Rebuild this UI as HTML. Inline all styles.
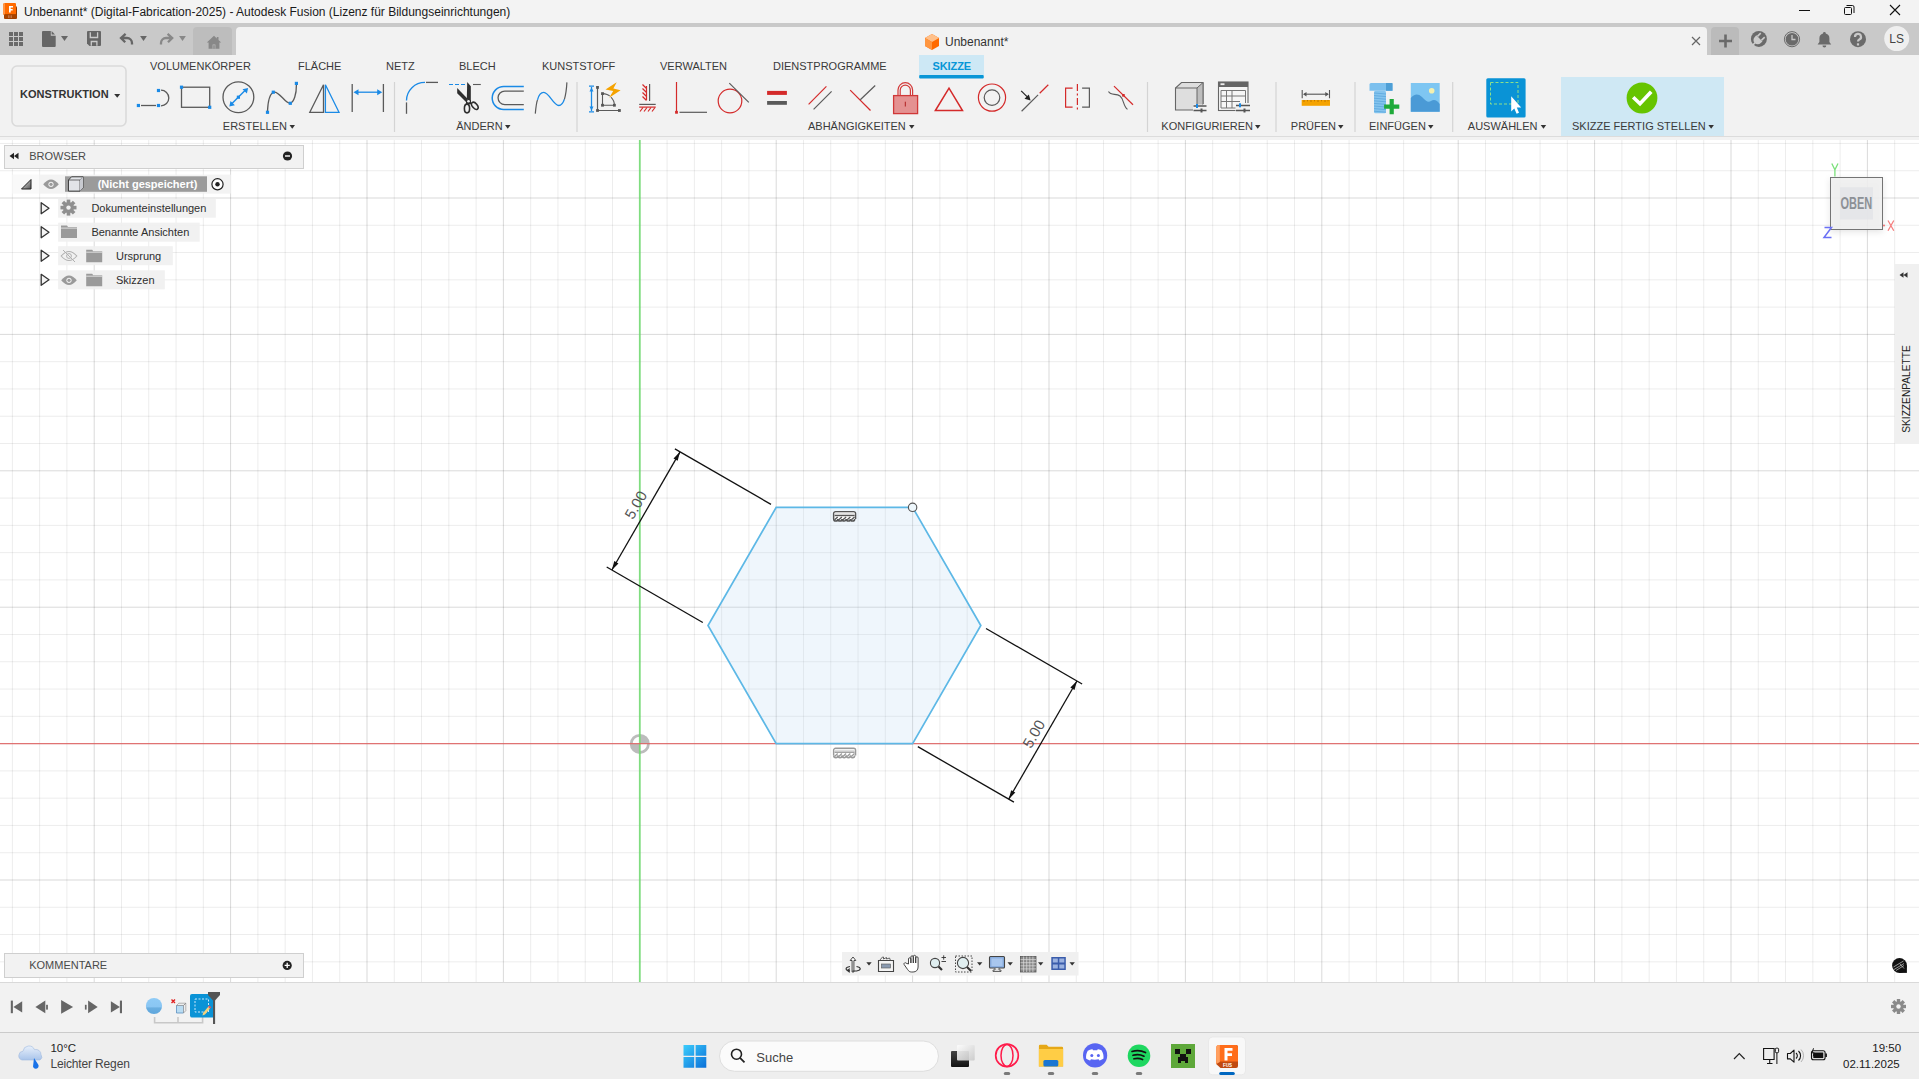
<!DOCTYPE html><html><head><meta charset="utf-8"><style>
*{margin:0;padding:0;box-sizing:border-box}
html,body{width:1919px;height:1079px;overflow:hidden;background:#f2f2f2;font-family:"Liberation Sans",sans-serif;color:#333}
.a{position:absolute;white-space:nowrap}
svg{position:absolute;left:0;top:0;overflow:visible}
.tab{font-size:11px;color:#3c3c3c;top:60px}
.grp{font-size:11px;color:#3c3c3c;top:120px}
.tri{display:inline-block;width:0;height:0;border-left:3px solid transparent;border-right:3px solid transparent;border-top:4px solid #333;vertical-align:middle;margin-left:3px;position:relative;top:-1px}
.tree{font-size:11px;color:#2e2e2e}
</style></head><body>
<div class="a" style="left:0;top:0;width:1919px;height:23px;background:#f3f3f3"></div>
<div class="a" style="left:0;top:23px;width:1919px;height:32px;background:#c9c9c9"></div>
<div class="a" style="left:0;top:55px;width:1919px;height:82px;background:#f2f2f2"></div>
<div class="a" style="left:0;top:136px;width:1919px;height:1px;background:#dcdcdc"></div>
<div class="a" style="left:0;top:140px;width:1919px;height:842px;background:#fff"></div>
<div class="a" style="left:0;top:982px;width:1919px;height:51px;background:#f2f2f2;border-top:1px solid #d9d9d9;border-bottom:1px solid #cbcbcb"></div>
<div class="a" style="left:0;top:1033px;width:1919px;height:46px;background:#eeeeee"></div>
<svg width="1919" height="1079" style="left:0;top:0"><defs><clipPath id="cv"><rect x="0" y="140" width="1919" height="842"/></clipPath></defs><g clip-path="url(#cv)"><line x1="12.36" y1="138" x2="12.36" y2="982" stroke="#000" stroke-opacity="0.075" stroke-width="1"/><line x1="39.64" y1="138" x2="39.64" y2="982" stroke="#000" stroke-opacity="0.075" stroke-width="1"/><line x1="66.92" y1="138" x2="66.92" y2="982" stroke="#000" stroke-opacity="0.075" stroke-width="1"/><line x1="94.20" y1="138" x2="94.20" y2="982" stroke="#000" stroke-opacity="0.15" stroke-width="1"/><line x1="121.48" y1="138" x2="121.48" y2="982" stroke="#000" stroke-opacity="0.075" stroke-width="1"/><line x1="148.76" y1="138" x2="148.76" y2="982" stroke="#000" stroke-opacity="0.075" stroke-width="1"/><line x1="176.04" y1="138" x2="176.04" y2="982" stroke="#000" stroke-opacity="0.075" stroke-width="1"/><line x1="203.32" y1="138" x2="203.32" y2="982" stroke="#000" stroke-opacity="0.075" stroke-width="1"/><line x1="230.60" y1="138" x2="230.60" y2="982" stroke="#000" stroke-opacity="0.15" stroke-width="1"/><line x1="257.88" y1="138" x2="257.88" y2="982" stroke="#000" stroke-opacity="0.075" stroke-width="1"/><line x1="285.16" y1="138" x2="285.16" y2="982" stroke="#000" stroke-opacity="0.075" stroke-width="1"/><line x1="312.44" y1="138" x2="312.44" y2="982" stroke="#000" stroke-opacity="0.075" stroke-width="1"/><line x1="339.72" y1="138" x2="339.72" y2="982" stroke="#000" stroke-opacity="0.075" stroke-width="1"/><line x1="367.00" y1="138" x2="367.00" y2="982" stroke="#000" stroke-opacity="0.15" stroke-width="1"/><line x1="394.28" y1="138" x2="394.28" y2="982" stroke="#000" stroke-opacity="0.075" stroke-width="1"/><line x1="421.56" y1="138" x2="421.56" y2="982" stroke="#000" stroke-opacity="0.075" stroke-width="1"/><line x1="448.84" y1="138" x2="448.84" y2="982" stroke="#000" stroke-opacity="0.075" stroke-width="1"/><line x1="476.12" y1="138" x2="476.12" y2="982" stroke="#000" stroke-opacity="0.075" stroke-width="1"/><line x1="503.40" y1="138" x2="503.40" y2="982" stroke="#000" stroke-opacity="0.15" stroke-width="1"/><line x1="530.68" y1="138" x2="530.68" y2="982" stroke="#000" stroke-opacity="0.075" stroke-width="1"/><line x1="557.96" y1="138" x2="557.96" y2="982" stroke="#000" stroke-opacity="0.075" stroke-width="1"/><line x1="585.24" y1="138" x2="585.24" y2="982" stroke="#000" stroke-opacity="0.075" stroke-width="1"/><line x1="612.52" y1="138" x2="612.52" y2="982" stroke="#000" stroke-opacity="0.075" stroke-width="1"/><line x1="639.80" y1="138" x2="639.80" y2="982" stroke="#000" stroke-opacity="0.15" stroke-width="1"/><line x1="667.08" y1="138" x2="667.08" y2="982" stroke="#000" stroke-opacity="0.075" stroke-width="1"/><line x1="694.36" y1="138" x2="694.36" y2="982" stroke="#000" stroke-opacity="0.075" stroke-width="1"/><line x1="721.64" y1="138" x2="721.64" y2="982" stroke="#000" stroke-opacity="0.075" stroke-width="1"/><line x1="748.92" y1="138" x2="748.92" y2="982" stroke="#000" stroke-opacity="0.075" stroke-width="1"/><line x1="776.20" y1="138" x2="776.20" y2="982" stroke="#000" stroke-opacity="0.15" stroke-width="1"/><line x1="803.48" y1="138" x2="803.48" y2="982" stroke="#000" stroke-opacity="0.075" stroke-width="1"/><line x1="830.76" y1="138" x2="830.76" y2="982" stroke="#000" stroke-opacity="0.075" stroke-width="1"/><line x1="858.04" y1="138" x2="858.04" y2="982" stroke="#000" stroke-opacity="0.075" stroke-width="1"/><line x1="885.32" y1="138" x2="885.32" y2="982" stroke="#000" stroke-opacity="0.075" stroke-width="1"/><line x1="912.60" y1="138" x2="912.60" y2="982" stroke="#000" stroke-opacity="0.15" stroke-width="1"/><line x1="939.88" y1="138" x2="939.88" y2="982" stroke="#000" stroke-opacity="0.075" stroke-width="1"/><line x1="967.16" y1="138" x2="967.16" y2="982" stroke="#000" stroke-opacity="0.075" stroke-width="1"/><line x1="994.44" y1="138" x2="994.44" y2="982" stroke="#000" stroke-opacity="0.075" stroke-width="1"/><line x1="1021.72" y1="138" x2="1021.72" y2="982" stroke="#000" stroke-opacity="0.075" stroke-width="1"/><line x1="1049.00" y1="138" x2="1049.00" y2="982" stroke="#000" stroke-opacity="0.15" stroke-width="1"/><line x1="1076.28" y1="138" x2="1076.28" y2="982" stroke="#000" stroke-opacity="0.075" stroke-width="1"/><line x1="1103.56" y1="138" x2="1103.56" y2="982" stroke="#000" stroke-opacity="0.075" stroke-width="1"/><line x1="1130.84" y1="138" x2="1130.84" y2="982" stroke="#000" stroke-opacity="0.075" stroke-width="1"/><line x1="1158.12" y1="138" x2="1158.12" y2="982" stroke="#000" stroke-opacity="0.075" stroke-width="1"/><line x1="1185.40" y1="138" x2="1185.40" y2="982" stroke="#000" stroke-opacity="0.15" stroke-width="1"/><line x1="1212.68" y1="138" x2="1212.68" y2="982" stroke="#000" stroke-opacity="0.075" stroke-width="1"/><line x1="1239.96" y1="138" x2="1239.96" y2="982" stroke="#000" stroke-opacity="0.075" stroke-width="1"/><line x1="1267.24" y1="138" x2="1267.24" y2="982" stroke="#000" stroke-opacity="0.075" stroke-width="1"/><line x1="1294.52" y1="138" x2="1294.52" y2="982" stroke="#000" stroke-opacity="0.075" stroke-width="1"/><line x1="1321.80" y1="138" x2="1321.80" y2="982" stroke="#000" stroke-opacity="0.15" stroke-width="1"/><line x1="1349.08" y1="138" x2="1349.08" y2="982" stroke="#000" stroke-opacity="0.075" stroke-width="1"/><line x1="1376.36" y1="138" x2="1376.36" y2="982" stroke="#000" stroke-opacity="0.075" stroke-width="1"/><line x1="1403.64" y1="138" x2="1403.64" y2="982" stroke="#000" stroke-opacity="0.075" stroke-width="1"/><line x1="1430.92" y1="138" x2="1430.92" y2="982" stroke="#000" stroke-opacity="0.075" stroke-width="1"/><line x1="1458.20" y1="138" x2="1458.20" y2="982" stroke="#000" stroke-opacity="0.15" stroke-width="1"/><line x1="1485.48" y1="138" x2="1485.48" y2="982" stroke="#000" stroke-opacity="0.075" stroke-width="1"/><line x1="1512.76" y1="138" x2="1512.76" y2="982" stroke="#000" stroke-opacity="0.075" stroke-width="1"/><line x1="1540.04" y1="138" x2="1540.04" y2="982" stroke="#000" stroke-opacity="0.075" stroke-width="1"/><line x1="1567.32" y1="138" x2="1567.32" y2="982" stroke="#000" stroke-opacity="0.075" stroke-width="1"/><line x1="1594.60" y1="138" x2="1594.60" y2="982" stroke="#000" stroke-opacity="0.15" stroke-width="1"/><line x1="1621.88" y1="138" x2="1621.88" y2="982" stroke="#000" stroke-opacity="0.075" stroke-width="1"/><line x1="1649.16" y1="138" x2="1649.16" y2="982" stroke="#000" stroke-opacity="0.075" stroke-width="1"/><line x1="1676.44" y1="138" x2="1676.44" y2="982" stroke="#000" stroke-opacity="0.075" stroke-width="1"/><line x1="1703.72" y1="138" x2="1703.72" y2="982" stroke="#000" stroke-opacity="0.075" stroke-width="1"/><line x1="1731.00" y1="138" x2="1731.00" y2="982" stroke="#000" stroke-opacity="0.15" stroke-width="1"/><line x1="1758.28" y1="138" x2="1758.28" y2="982" stroke="#000" stroke-opacity="0.075" stroke-width="1"/><line x1="1785.56" y1="138" x2="1785.56" y2="982" stroke="#000" stroke-opacity="0.075" stroke-width="1"/><line x1="1812.84" y1="138" x2="1812.84" y2="982" stroke="#000" stroke-opacity="0.075" stroke-width="1"/><line x1="1840.12" y1="138" x2="1840.12" y2="982" stroke="#000" stroke-opacity="0.075" stroke-width="1"/><line x1="1867.40" y1="138" x2="1867.40" y2="982" stroke="#000" stroke-opacity="0.15" stroke-width="1"/><line x1="1894.68" y1="138" x2="1894.68" y2="982" stroke="#000" stroke-opacity="0.075" stroke-width="1"/><line x1="0" y1="143.44" x2="1919" y2="143.44" stroke="#000" stroke-opacity="0.075" stroke-width="1"/><line x1="0" y1="170.72" x2="1919" y2="170.72" stroke="#000" stroke-opacity="0.075" stroke-width="1"/><line x1="0" y1="198.00" x2="1919" y2="198.00" stroke="#000" stroke-opacity="0.15" stroke-width="1"/><line x1="0" y1="225.28" x2="1919" y2="225.28" stroke="#000" stroke-opacity="0.075" stroke-width="1"/><line x1="0" y1="252.56" x2="1919" y2="252.56" stroke="#000" stroke-opacity="0.075" stroke-width="1"/><line x1="0" y1="279.84" x2="1919" y2="279.84" stroke="#000" stroke-opacity="0.075" stroke-width="1"/><line x1="0" y1="307.12" x2="1919" y2="307.12" stroke="#000" stroke-opacity="0.075" stroke-width="1"/><line x1="0" y1="334.40" x2="1919" y2="334.40" stroke="#000" stroke-opacity="0.15" stroke-width="1"/><line x1="0" y1="361.68" x2="1919" y2="361.68" stroke="#000" stroke-opacity="0.075" stroke-width="1"/><line x1="0" y1="388.96" x2="1919" y2="388.96" stroke="#000" stroke-opacity="0.075" stroke-width="1"/><line x1="0" y1="416.24" x2="1919" y2="416.24" stroke="#000" stroke-opacity="0.075" stroke-width="1"/><line x1="0" y1="443.52" x2="1919" y2="443.52" stroke="#000" stroke-opacity="0.075" stroke-width="1"/><line x1="0" y1="470.80" x2="1919" y2="470.80" stroke="#000" stroke-opacity="0.15" stroke-width="1"/><line x1="0" y1="498.08" x2="1919" y2="498.08" stroke="#000" stroke-opacity="0.075" stroke-width="1"/><line x1="0" y1="525.36" x2="1919" y2="525.36" stroke="#000" stroke-opacity="0.075" stroke-width="1"/><line x1="0" y1="552.64" x2="1919" y2="552.64" stroke="#000" stroke-opacity="0.075" stroke-width="1"/><line x1="0" y1="579.92" x2="1919" y2="579.92" stroke="#000" stroke-opacity="0.075" stroke-width="1"/><line x1="0" y1="607.20" x2="1919" y2="607.20" stroke="#000" stroke-opacity="0.15" stroke-width="1"/><line x1="0" y1="634.48" x2="1919" y2="634.48" stroke="#000" stroke-opacity="0.075" stroke-width="1"/><line x1="0" y1="661.76" x2="1919" y2="661.76" stroke="#000" stroke-opacity="0.075" stroke-width="1"/><line x1="0" y1="689.04" x2="1919" y2="689.04" stroke="#000" stroke-opacity="0.075" stroke-width="1"/><line x1="0" y1="716.32" x2="1919" y2="716.32" stroke="#000" stroke-opacity="0.075" stroke-width="1"/><line x1="0" y1="743.60" x2="1919" y2="743.60" stroke="#000" stroke-opacity="0.15" stroke-width="1"/><line x1="0" y1="770.88" x2="1919" y2="770.88" stroke="#000" stroke-opacity="0.075" stroke-width="1"/><line x1="0" y1="798.16" x2="1919" y2="798.16" stroke="#000" stroke-opacity="0.075" stroke-width="1"/><line x1="0" y1="825.44" x2="1919" y2="825.44" stroke="#000" stroke-opacity="0.075" stroke-width="1"/><line x1="0" y1="852.72" x2="1919" y2="852.72" stroke="#000" stroke-opacity="0.075" stroke-width="1"/><line x1="0" y1="880.00" x2="1919" y2="880.00" stroke="#000" stroke-opacity="0.15" stroke-width="1"/><line x1="0" y1="907.28" x2="1919" y2="907.28" stroke="#000" stroke-opacity="0.075" stroke-width="1"/><line x1="0" y1="934.56" x2="1919" y2="934.56" stroke="#000" stroke-opacity="0.075" stroke-width="1"/><line x1="0" y1="961.84" x2="1919" y2="961.84" stroke="#000" stroke-opacity="0.075" stroke-width="1"/><circle cx="639.8" cy="743.9" r="8.6" fill="none" stroke="#bcbcbc" stroke-width="2.8"/><path d="M639.8 743.9 L648.4 743.9 A8.6 8.6 0 0 0 639.8 735.3 Z" fill="#bcbcbc"/><path d="M639.8 743.9 L631.1999999999999 743.9 A8.6 8.6 0 0 0 639.8 752.5 Z" fill="#bcbcbc"/><line x1="639.8" y1="138" x2="639.8" y2="982" stroke="#6fdc6f" stroke-opacity="0.85" stroke-width="1.8"/><line x1="0" y1="743.6" x2="1919" y2="743.6" stroke="#e06060" stroke-opacity="0.85" stroke-width="1.3"/><polygon points="980.80,625.50 912.60,507.37 776.20,507.37 708.00,625.50 776.20,743.63 912.60,743.63" fill="#b4d8f2" fill-opacity="0.22" stroke="#5db8e6" stroke-width="1.7"/><circle cx="912.60" cy="507.37" r="4.2" fill="#eef7fc" stroke="#555" stroke-width="1.1"/><g transform="translate(832.9,510.9)"><path d="M0.85 8 V2.7 A1.85 1.85 0 0 1 2.7 0.85 H20.7 A1.85 1.85 0 0 1 22.55 2.7 V8" fill="#fff" stroke="#555" stroke-width="1.7"/><rect x="1.7" y="1.7" width="20" height="6.5" fill="#fff"/><line x1="1.7" y1="2.9" x2="21.7" y2="2.9" stroke="#dedede" stroke-width="1.2"/><line x1="1.7" y1="4.6" x2="21.7" y2="4.6" stroke="#555" stroke-width="1.4"/><path d="M0.80 8 a2.1 2.1 0 0 0 4.2 0" fill="none" stroke="#555" stroke-width="1.5"/><line x1="1.70" y1="8.8" x2="4.80" y2="6" stroke="#555" stroke-width="1.3"/><path d="M5.00 8 a2.1 2.1 0 0 0 4.2 0" fill="none" stroke="#555" stroke-width="1.5"/><line x1="5.90" y1="8.8" x2="9.00" y2="6" stroke="#555" stroke-width="1.3"/><path d="M9.20 8 a2.1 2.1 0 0 0 4.2 0" fill="none" stroke="#555" stroke-width="1.5"/><line x1="10.10" y1="8.8" x2="13.20" y2="6" stroke="#555" stroke-width="1.3"/><path d="M13.40 8 a2.1 2.1 0 0 0 4.2 0" fill="none" stroke="#555" stroke-width="1.5"/><line x1="14.30" y1="8.8" x2="17.40" y2="6" stroke="#555" stroke-width="1.3"/><path d="M17.60 8 a2.1 2.1 0 0 0 4.2 0" fill="none" stroke="#555" stroke-width="1.5"/><line x1="18.50" y1="8.8" x2="21.60" y2="6" stroke="#555" stroke-width="1.3"/></g><g transform="translate(832.9,747.6)"><path d="M0.85 8 V2.7 A1.85 1.85 0 0 1 2.7 0.85 H20.7 A1.85 1.85 0 0 1 22.55 2.7 V8" fill="#fff" stroke="#999" stroke-width="1.7"/><rect x="1.7" y="1.7" width="20" height="6.5" fill="#fff"/><line x1="1.7" y1="2.9" x2="21.7" y2="2.9" stroke="#dedede" stroke-width="1.2"/><line x1="1.7" y1="4.6" x2="21.7" y2="4.6" stroke="#999" stroke-width="1.4"/><path d="M0.80 8 a2.1 2.1 0 0 0 4.2 0" fill="none" stroke="#999" stroke-width="1.5"/><line x1="1.70" y1="8.8" x2="4.80" y2="6" stroke="#999" stroke-width="1.3"/><path d="M5.00 8 a2.1 2.1 0 0 0 4.2 0" fill="none" stroke="#999" stroke-width="1.5"/><line x1="5.90" y1="8.8" x2="9.00" y2="6" stroke="#999" stroke-width="1.3"/><path d="M9.20 8 a2.1 2.1 0 0 0 4.2 0" fill="none" stroke="#999" stroke-width="1.5"/><line x1="10.10" y1="8.8" x2="13.20" y2="6" stroke="#999" stroke-width="1.3"/><path d="M13.40 8 a2.1 2.1 0 0 0 4.2 0" fill="none" stroke="#999" stroke-width="1.5"/><line x1="14.30" y1="8.8" x2="17.40" y2="6" stroke="#999" stroke-width="1.3"/><path d="M17.60 8 a2.1 2.1 0 0 0 4.2 0" fill="none" stroke="#999" stroke-width="1.5"/><line x1="18.50" y1="8.8" x2="21.60" y2="6" stroke="#999" stroke-width="1.3"/></g><line x1="771.00" y1="504.37" x2="674.88" y2="448.87" stroke="#111" stroke-width="1.3"/><line x1="702.80" y1="622.50" x2="606.68" y2="567.00" stroke="#111" stroke-width="1.3"/><line x1="680.07" y1="451.87" x2="611.87" y2="570.00" stroke="#111" stroke-width="1.3"/><path d="M680.07 451.87 L673.49 458.47 L677.65 460.87 Z" fill="#111"/><path d="M611.87 570.00 L614.29 561.01 L618.45 563.41 Z" fill="#111"/><line x1="986.00" y1="628.50" x2="1082.12" y2="684.00" stroke="#111" stroke-width="1.3"/><line x1="917.80" y1="746.63" x2="1013.92" y2="802.13" stroke="#111" stroke-width="1.3"/><line x1="1076.93" y1="681.00" x2="1008.73" y2="799.13" stroke="#111" stroke-width="1.3"/><path d="M1076.93 681.00 L1074.51 689.99 L1070.35 687.59 Z" fill="#111"/><path d="M1008.73 799.13 L1015.31 792.53 L1011.15 790.13 Z" fill="#111"/></g></svg><div class="a" style="left:616.3px;top:496.9px;width:40px;height:16px;line-height:16px;text-align:center;font-size:15px;color:#555;transform:rotate(-60deg)">5.00</div><div class="a" style="left:1013.8px;top:726.3px;width:40px;height:16px;line-height:16px;text-align:center;font-size:15px;color:#555;transform:rotate(-60deg)">5.00</div>
<div class="a" style="left:24px;top:5.84px;font-size:12px;line-height:12px;font-weight:400;color:#1a1a1a;">Unbenannt* (Digital-Fabrication-2025) - Autodesk Fusion (Lizenz für Bildungseinrichtungen)</div><svg width="1919" height="1079"><rect x="4" y="6" width="13" height="13" rx="1.5" fill="#8f3a00"/><path d="M5 3 h10 a1 1 0 0 1 1 1 v10.5 h-13 v-9.5 a2 2 0 0 1 2 -2 z" fill="#ff6a00"/><path d="M3 5 a2 2 0 0 1 2 -2 v11.5 h-2 z" fill="#ff9444"/><path d="M9 6 h4 v1.6 h-2.3 v1.3 h2 v1.5 h-2 v2.2 h-1.7 z" fill="#fff"/><rect x="4.2" y="14.3" width="12.6" height="4.5" rx="1" fill="#a84300"/><path d="M8 16 h4.5 M8 17.2 h4.5" stroke="#d9a890" stroke-width="0.7" stroke-dasharray="1 0.5"/><line x1="1799" y1="10.5" x2="1810" y2="10.5" stroke="#111" stroke-width="1"/><rect x="1844.5" y="7.5" width="7" height="7" rx="1" fill="none" stroke="#111" stroke-width="1"/><path d="M1846.5 5.5 h6 a1.5 1.5 0 0 1 1.5 1.5 v6" fill="none" stroke="#111" stroke-width="1"/><path d="M1890 5 L1900 15 M1900 5 L1890 15" stroke="#111" stroke-width="1.1"/><rect x="9" y="32" width="4" height="4" fill="#6a6a6a"/><rect x="9" y="37" width="4" height="4" fill="#6a6a6a"/><rect x="9" y="42" width="4" height="4" fill="#6a6a6a"/><rect x="14" y="32" width="4" height="4" fill="#6a6a6a"/><rect x="14" y="37" width="4" height="4" fill="#6a6a6a"/><rect x="14" y="42" width="4" height="4" fill="#6a6a6a"/><rect x="19" y="32" width="4" height="4" fill="#6a6a6a"/><rect x="19" y="37" width="4" height="4" fill="#6a6a6a"/><rect x="19" y="42" width="4" height="4" fill="#6a6a6a"/><path d="M42 32 a1 1 0 0 1 1 -1 h7.8 v4.8 h4.9 v10.2 a1 1 0 0 1 -1 1 h-11.7 a1 1 0 0 1 -1 -1 z" fill="#666"/><path d="M51.6 31 L55 34.5 H51.6 Z" fill="#666"/><path d="M61 36 L68 36 L64.5 41 Z" fill="#666"/><path d="M87 32 a1 1 0 0 1 1 -1 h12 a1 1 0 0 1 1 1 v13 a1 1 0 0 1 -1 1 h-10.5 l-2.5 -2.5 z" fill="#666"/><path d="M90.3 32.3 v5.2 h7.3 v-5.2" fill="none" stroke="#cbcbcb" stroke-width="1.3"/><path d="M91.3 45.8 v-4.3 h5.6 v4.3" fill="none" stroke="#cbcbcb" stroke-width="1.3"/><path d="M125.6 33.9 L121 38 L125.2 42.2 M121 38 H127 A5 5 0 0 1 132 43 V44.6" fill="none" stroke="#666" stroke-width="2.3" stroke-linejoin="miter"/><path d="M140.1 35.9 L146.9 35.9 L143.5 40.9 Z" fill="#666"/><path d="M167.6 33.9 L172.2 38 L168 42.2 M172.2 38 H166 A5 5 0 0 0 161 43 V44.6" fill="none" stroke="#888" stroke-width="2.3" stroke-linejoin="miter"/><path d="M179.1 35.9 L185.9 35.9 L182.5 40.9 Z" fill="#888"/><path d="M193 55 v-24 a4 4 0 0 1 4 -4 h31 a4 4 0 0 1 4 4 v24 z" fill="#bdbdbd"/><path d="M214 35.8 L206.8 42.5 H208.6 V48.8 H219.4 V42.5 H221.2 L218.5 40 V37 H216.8 V38.4 Z" fill="#888"/><rect x="212.6" y="44.5" width="2.8" height="4.3" fill="#bdbdbd"/><rect x="213.3" y="45.2" width="1.4" height="3.6" fill="#888"/><path d="M236 55 v-24 a4 4 0 0 1 4 -4 h1463 a4 4 0 0 1 4 4 v24 z" fill="#f2f2f2"/><path d="M932 34 l7 4 v8 l-7 4 l-7 -4 v-8 z" fill="#ff6a00"/><path d="M932 34 l7 4 l-7 4 l-7 -4 z" fill="#ffc08a"/><path d="M925 38 l7 4 v8 l-7 -4 z" fill="#ff9640"/><path d="M1692 37 L1700 45 M1700 37 L1692 45" stroke="#666" stroke-width="1.2"/><path d="M1711 55 v-24 a4 4 0 0 1 4 -4 h20 a4 4 0 0 1 4 4 v24 z" fill="#bbbbbb"/><path d="M1725.5 34.5 v13 M1719 41 h13" stroke="#6a6a6a" stroke-width="2.6"/><circle cx="1758.9" cy="38.9" r="8" fill="#6a6a6a"/><g transform="rotate(45 1758.9 38.9)"><path d="M1754.6 38.2 h8.6 v2.3 a4.3 4.3 0 0 1 -8.6 0 z" fill="#cbcbcb"/><rect x="1755.3" y="33.5" width="1.6" height="4.7" fill="#cbcbcb"/><rect x="1760.9" y="33.5" width="1.6" height="4.7" fill="#cbcbcb"/><rect x="1758.1" y="44" width="1.6" height="4" fill="#cbcbcb"/></g><circle cx="1792" cy="39.2" r="7.6" fill="none" stroke="#6a6a6a" stroke-width="1"/><circle cx="1792" cy="39.2" r="6.3" fill="#6a6a6a"/><path d="M1792 35 v4.5 h3.5" fill="none" stroke="#c9c9c9" stroke-width="1.3"/><path d="M1824.4 32 a1.4 1.4 0 0 1 1.4 1.4 a5 5 0 0 1 3.6 4.8 v3.8 l1.8 2.5 h-13.6 l1.8 -2.5 v-3.8 a5 5 0 0 1 3.6 -4.8 a1.4 1.4 0 0 1 1.4 -1.4 z" fill="#6a6a6a"/><path d="M1822.5 45.5 h3.8 a1.9 1.9 0 0 1 -3.8 0 z" fill="#6a6a6a"/><circle cx="1858" cy="39.2" r="8" fill="#6a6a6a"/><path d="M1855 37 a3 3 0 1 1 4.3 2.6 c-1 .5 -1.3 1 -1.3 2" fill="none" stroke="#c9c9c9" stroke-width="2.2"/><rect x="1856.9" y="43.3" width="2.2" height="2.2" fill="#c9c9c9"/><circle cx="1896.7" cy="38.6" r="12.5" fill="#efefef"/><rect x="12" y="66" width="114" height="60" rx="5" fill="#f2f2f2" stroke="#dadada" stroke-width="1.6"/><path d="M114.2 94 L120.2 94 L117.2 97.8 Z" fill="#333"/><rect x="919" y="55" width="65" height="23" fill="#cde8f5"/><rect x="919.2" y="75" width="64.5" height="3.4" rx="1" fill="#0696d7"/><line x1="394.5" y1="82" x2="394.5" y2="132" stroke="#d4d4d4" stroke-width="1.2"/><line x1="577" y1="82" x2="577" y2="132" stroke="#d4d4d4" stroke-width="1.2"/><line x1="1147.5" y1="82" x2="1147.5" y2="132" stroke="#d4d4d4" stroke-width="1.2"/><line x1="1276" y1="82" x2="1276" y2="132" stroke="#d4d4d4" stroke-width="1.2"/><line x1="1355" y1="82" x2="1355" y2="132" stroke="#d4d4d4" stroke-width="1.2"/><line x1="1452.7" y1="82" x2="1452.7" y2="132" stroke="#d4d4d4" stroke-width="1.2"/><rect x="1561" y="77" width="163" height="59" fill="#cfe8f4"/><path d="M289.5 125 L295.0 125 L292.25 128.8 Z" fill="#333"/><path d="M505 125 L510.5 125 L507.75 128.8 Z" fill="#333"/><path d="M909 125 L914.5 125 L911.75 128.8 Z" fill="#333"/><path d="M1255 125 L1260.5 125 L1257.75 128.8 Z" fill="#333"/><path d="M1338 125 L1343.5 125 L1340.75 128.8 Z" fill="#333"/><path d="M1428 125 L1433.5 125 L1430.75 128.8 Z" fill="#333"/><path d="M1540.7 125 L1546.2 125 L1543.45 128.8 Z" fill="#333"/><path d="M1708.4 125 L1713.9 125 L1711.15 128.8 Z" fill="#333"/></svg><div class="a" style="left:1889.3px;top:33.04px;font-size:12px;line-height:12px;font-weight:400;color:#444;">LS</div><div class="a" style="left:945px;top:35.74px;font-size:12px;line-height:12px;font-weight:400;color:#333;">Unbenannt*</div><div class="a" style="left:20px;top:89.39px;font-size:11px;line-height:11px;font-weight:700;color:#333;">KONSTRUKTION</div><div class="a" style="left:150px;top:60.69px;font-size:11px;line-height:11px;font-weight:400;color:#3a3a3a;">VOLUMENKÖRPER</div><div class="a" style="left:298px;top:60.69px;font-size:11px;line-height:11px;font-weight:400;color:#3a3a3a;">FLÄCHE</div><div class="a" style="left:386px;top:60.69px;font-size:11px;line-height:11px;font-weight:400;color:#3a3a3a;">NETZ</div><div class="a" style="left:459px;top:60.69px;font-size:11px;line-height:11px;font-weight:400;color:#3a3a3a;">BLECH</div><div class="a" style="left:542px;top:60.69px;font-size:11px;line-height:11px;font-weight:400;color:#3a3a3a;">KUNSTSTOFF</div><div class="a" style="left:660px;top:60.69px;font-size:11px;line-height:11px;font-weight:400;color:#3a3a3a;">VERWALTEN</div><div class="a" style="left:773px;top:60.69px;font-size:11px;line-height:11px;font-weight:400;color:#3a3a3a;">DIENSTPROGRAMME</div><div class="a" style="left:932.5px;top:60.69px;font-size:11px;line-height:11px;font-weight:400;color:#0696d7;letter-spacing:-0.1px;font-weight:600">SKIZZE</div><div class="a" style="left:222.8px;top:121.19px;font-size:11px;line-height:11px;font-weight:400;color:#3a3a3a;">ERSTELLEN</div><div class="a" style="left:456.2px;top:121.19px;font-size:11px;line-height:11px;font-weight:400;color:#3a3a3a;">ÄNDERN</div><div class="a" style="left:808px;top:121.19px;font-size:11px;line-height:11px;font-weight:400;color:#3a3a3a;">ABHÄNGIGKEITEN</div><div class="a" style="left:1161.3px;top:121.19px;font-size:11px;line-height:11px;font-weight:400;color:#3a3a3a;">KONFIGURIEREN</div><div class="a" style="left:1290.8px;top:121.19px;font-size:11px;line-height:11px;font-weight:400;color:#3a3a3a;">PRÜFEN</div><div class="a" style="left:1369px;top:121.19px;font-size:11px;line-height:11px;font-weight:400;color:#3a3a3a;">EINFÜGEN</div><div class="a" style="left:1467.8px;top:121.19px;font-size:11px;line-height:11px;font-weight:400;color:#3a3a3a;">AUSWÄHLEN</div><div class="a" style="left:1572px;top:121.19px;font-size:11px;line-height:11px;font-weight:400;color:#3a3a3a;">SKIZZE FERTIG STELLEN</div>
<svg width="1919" height="1079"><line x1="141" y1="105.5" x2="156" y2="105.5" stroke="#5a5a5a" stroke-width="1.3"/><path d="M161 90.2 A7.8 7.8 0 0 1 161 105.8" fill="none" stroke="#5a5a5a" stroke-width="1.3"/><rect x="136.80" y="103.90" width="3.2" height="3.2" fill="#1a8ae6"/><rect x="156.90" y="103.90" width="3.2" height="3.2" fill="#1a8ae6"/><rect x="156.90" y="88.90" width="3.2" height="3.2" fill="#1a8ae6"/><rect x="181.5" y="87.2" width="28.2" height="20.1" fill="none" stroke="#5a5a5a" stroke-width="1.3"/><rect x="179.90" y="85.60" width="3.2" height="3.2" fill="#1a8ae6"/><rect x="208.10" y="105.70" width="3.2" height="3.2" fill="#1a8ae6"/><circle cx="238.4" cy="97.2" r="15.4" fill="none" stroke="#5a5a5a" stroke-width="1.3"/><line x1="231.5" y1="104.1" x2="246" y2="89.6" stroke="#1a8ae6" stroke-width="1.4"/><path d="M229.3 106.5 l1.2 -5.6 l4.4 4.4 z M248.1 88 l-1.2 5.6 l-4.4 -4.4 z" fill="#1a8ae6"/><rect x="236.80" y="95.60" width="3.2" height="3.2" fill="#1a8ae6"/><path d="M267.5 111 C268 100 270 94 273.3 92.2 C279 90 285 104 290.3 103.3 C294 102 296.5 94 296.4 85" fill="none" stroke="#5a5a5a" stroke-width="1.3"/><rect x="265.90" y="110.70" width="3.2" height="3.2" fill="#1a8ae6"/><rect x="271.70" y="90.60" width="3.2" height="3.2" fill="#1a8ae6"/><rect x="288.70" y="101.70" width="3.2" height="3.2" fill="#1a8ae6"/><rect x="294.80" y="81.80" width="3.2" height="3.2" fill="#1a8ae6"/><path d="M309.8 112.3 L323.5 84.8 V112.3 Z" fill="none" stroke="#5a5a5a" stroke-width="1.3" stroke-linejoin="miter"/><path d="M325.4 84.8 L339 112.3 H325.4 Z" fill="none" stroke="#1a8ae6" stroke-width="1.3"/><line x1="352.2" y1="84" x2="352.2" y2="112" stroke="#5a5a5a" stroke-width="1.3"/><line x1="383.4" y1="84" x2="383.4" y2="112" stroke="#5a5a5a" stroke-width="1.3"/><line x1="356" y1="92.2" x2="380" y2="92.2" stroke="#1a8ae6" stroke-width="1.3"/><path d="M353.5 92.2 l5 -3 v6 z M382.2 92.2 l-5 -3 v6 z" fill="#1a8ae6"/><line x1="406.5" y1="102.4" x2="406.5" y2="113.8" stroke="#5a5a5a" stroke-width="1.3"/><path d="M406.5 100.5 A18.5 18.2 0 0 1 425 82.4" fill="none" stroke="#1a8ae6" stroke-width="1.3"/><line x1="426" y1="82.4" x2="438" y2="82.4" stroke="#5a5a5a" stroke-width="1.3"/><path d="M449 84.5 h4 M455 84.5 h4 M461 84.5 h4" stroke="#1a8ae6" stroke-width="1.1"/><line x1="473" y1="84.5" x2="480.8" y2="84.5" stroke="#5a5a5a" stroke-width="1.1"/><path d="M467.2 82 L470.8 86.2 L470.8 101.5 L466.8 99.5 Z" fill="#2e2e2e"/><path d="M457.2 88 L467.3 98.5 L466.8 102.8 L457.2 93.3 Z" fill="#2e2e2e"/><path d="M466 100 L471 100 L471 104 L466 105 Z" fill="#2e2e2e"/><circle cx="468.5" cy="101.3" r="1.3" fill="#f2f2f2"/><ellipse cx="467" cy="108.5" rx="2.6" ry="4.4" fill="none" stroke="#2e2e2e" stroke-width="1.6"/><ellipse cx="474.8" cy="105.8" rx="4.2" ry="2.4" transform="rotate(50 474.8 105.8)" fill="none" stroke="#2e2e2e" stroke-width="1.6"/><path d="M523.8 86.5 H503.7 A11.5 11.5 0 0 0 503.7 109.5 H523.8" fill="none" stroke="#1a8ae6" stroke-width="1.5"/><path d="M523.8 91.1 H504.8 A6.75 6.75 0 0 0 504.8 104.6 H523.8" fill="none" stroke="#5a5a5a" stroke-width="1.3"/><path d="M535.3 113.6 C536 106 536.5 102 537.5 99.9" fill="none" stroke="#5a5a5a" stroke-width="1.2"/><path d="M537.5 99.9 C539 94 541.5 92.4 543.8 92.4 C549 92.4 553.5 105.5 558.8 105.5 C561.5 105.5 563.5 102 564.4 99.3" fill="none" stroke="#1a8ae6" stroke-width="1.3"/><path d="M564.4 99.3 C566 94 566.6 88 566.9 82.4" fill="none" stroke="#5a5a5a" stroke-width="1.2"/><line x1="591.5" y1="87" x2="591.5" y2="111" stroke="#1a8ae6" stroke-width="1.3"/><path d="M589 86.1 h5 M589 111.8 h5" stroke="#1a8ae6" stroke-width="1.2"/><path d="M591.5 87.5 l-2 4 h4 z M591.5 110.5 l-2 -4 h4 z" fill="#1a8ae6"/><path d="M597.5 87.4 V110.5 H619.4" fill="none" stroke="#5a5a5a" stroke-width="1.2"/><path d="M602.5 93.6 V105.25 H614.4" fill="none" stroke="#5a5a5a" stroke-width="1.1"/><path d="M602.5 93.6 A12 11.6 0 0 1 614.4 105.25" fill="none" stroke="#5a5a5a" stroke-width="1.1"/><rect x="596.10" y="86.00" width="2.8" height="2.8" fill="#555"/><rect x="596.10" y="109.10" width="2.8" height="2.8" fill="#555"/><rect x="618.00" y="109.10" width="2.8" height="2.8" fill="#555"/><rect x="601.10" y="92.20" width="2.8" height="2.8" fill="#555"/><rect x="601.10" y="103.85" width="2.8" height="2.8" fill="#555"/><rect x="613.00" y="103.85" width="2.8" height="2.8" fill="#555"/><path d="M616.7 82.2 L605.5 89.4 L613.2 91 L609.2 97.7 L620.6 90.3 L613.4 88.5 Z" fill="#f5a300" stroke="#f2f2f2" stroke-width="1.2" paint-order="stroke" stroke-linejoin="round"/><line x1="649.6" y1="84" x2="649.6" y2="101" stroke="#5a5a5a" stroke-width="1.2"/><path d="M642.5 84.5 l4 4 M642.5 88.5 l4 4 M642.5 92.5 l4 4 M642.5 96.5 l4 4 M646.5 86 V100" fill="none" stroke="#d42a2a" stroke-width="1.2"/><line x1="639.2" y1="104.4" x2="655.7" y2="104.4" stroke="#5a5a5a" stroke-width="1.2"/><line x1="639.2" y1="107.1" x2="655.7" y2="107.1" stroke="#d42a2a" stroke-width="1.2"/><path d="M640 111.5 l3 -4 M644 111.5 l3 -4 M648 111.5 l3 -4 M652 111.5 l3 -4" fill="none" stroke="#d42a2a" stroke-width="1.2"/><line x1="676.5" y1="82" x2="676.5" y2="111" stroke="#d42a2a" stroke-width="1.2"/><rect x="675.10" y="110.90" width="2.8" height="2.8" fill="#d42a2a"/><line x1="679.5" y1="112.3" x2="707" y2="112.3" stroke="#5a5a5a" stroke-width="1.2"/><circle cx="730" cy="101" r="11.8" fill="none" stroke="#d42a2a" stroke-width="1.2"/><line x1="729.3" y1="83.1" x2="748.8" y2="102.4" stroke="#5a5a5a" stroke-width="1.2"/><rect x="767.1" y="90.9" width="19.8" height="4" fill="#d42a2a"/><rect x="767.1" y="101" width="19.8" height="3.8" fill="#5a5a5a"/><line x1="808.6" y1="104.4" x2="826.4" y2="86.4" stroke="#d42a2a" stroke-width="1.2"/><line x1="813.6" y1="109.4" x2="831.6" y2="91.3" stroke="#5a5a5a" stroke-width="1.2"/><line x1="850.2" y1="90.2" x2="870.5" y2="110.5" stroke="#d42a2a" stroke-width="1.2"/><line x1="860.3" y1="99.7" x2="875.2" y2="85.5" stroke="#5a5a5a" stroke-width="1.2"/><path d="M898 95.5 V90 a7.3 7.3 0 0 1 14.6 0 V95.5" fill="none" stroke="#d23a3a" stroke-width="1.2"/><path d="M900.2 95.5 V90.3 a5.1 5.1 0 0 1 10.2 0 V95.5" fill="none" stroke="#d23a3a" stroke-width="1.2"/><rect x="893.6" y="95.6" width="24" height="18" fill="#e49191" stroke="#d03838" stroke-width="1.3"/><line x1="905.3" y1="101.7" x2="905.3" y2="106.5" stroke="#b02020" stroke-width="1"/><path d="M935.4 110.5 L949 88.2 L962.5 110.5 Z" fill="none" stroke="#d42a2a" stroke-width="1.5"/><circle cx="992" cy="97.6" r="13.6" fill="none" stroke="#d42a2a" stroke-width="1.2"/><circle cx="992" cy="97.6" r="7.8" fill="none" stroke="#5a5a5a" stroke-width="1.2"/><line x1="1021.6" y1="111.2" x2="1038.1" y2="94.9" stroke="#5a5a5a" stroke-width="1.2"/><line x1="1039.7" y1="93.2" x2="1048.3" y2="84.8" stroke="#d42a2a" stroke-width="1.2"/><line x1="1021.2" y1="90.9" x2="1027" y2="96.7" stroke="#222" stroke-width="1.2"/><path d="M1030.6 100.4 L1024.5 98.8 L1028.8 94.6 Z" fill="#222"/><path d="M1072.6 88.2 H1065.6 V107.1 H1072.6" fill="none" stroke="#d42a2a" stroke-width="1.2"/><path d="M1082.1 88.2 H1089.4 V107.1 H1082.1" fill="none" stroke="#5a5a5a" stroke-width="1.2"/><line x1="1077.4" y1="84.1" x2="1077.4" y2="111.9" stroke="#d42a2a" stroke-width="1.2" stroke-dasharray="7 2.5 2 2.5"/><path d="M1108.5 91.5 C1111 96 1116 93 1120 96 C1124 99 1123 106 1127.5 109.4" fill="none" stroke="#5a5a5a" stroke-width="1.1"/><line x1="1114" y1="86.1" x2="1133" y2="104.8" stroke="#d42a2a" stroke-width="1.2"/><rect x="1122.10" y="94.00" width="2.6" height="2.6" fill="#d42a2a"/><path d="M1175.5 110 V88 L1181.5 82.5 H1203 V104 L1197 110 Z" fill="#dedede" stroke="#666" stroke-width="1.1"/><path d="M1197 110 V88 L1203 82.5 V104 Z" fill="#bdbdbd" stroke="#666" stroke-width="1"/><path d="M1175.5 88 H1197" stroke="#666" stroke-width="1"/><rect x="1193" y="104.5" width="13.5" height="8.5" fill="#f2f2f2"/><path d="M1193.5 106 H1206.5 M1193.5 110.5 H1206.5" stroke="#555" stroke-width="1.4"/><rect x="1196" y="104" width="2" height="4" fill="#1a8ae6"/><rect x="1200.5" y="108.5" width="2" height="4" fill="#555"/><rect x="1218.5" y="82" width="29.5" height="28.5" fill="#f6f6f6" stroke="#666" stroke-width="1.1"/><rect x="1218.5" y="82" width="29.5" height="5" fill="#666"/><rect x="1220.5" y="83.3" width="4" height="1.8" fill="#eee"/><path d="M1221 90.5 H1245.5 V108 H1221 Z M1221 96 H1245.5 M1221 101.5 H1240 M1226.5 90.5 V108 M1232 90.5 V108" fill="none" stroke="#777" stroke-width="1"/><rect x="1235.5" y="103" width="15" height="10.5" fill="#f2f2f2"/><path d="M1236 105.5 H1250 M1236 110.5 H1250" stroke="#555" stroke-width="1.4"/><rect x="1239" y="103.3" width="2" height="4" fill="#1a8ae6"/><rect x="1243.5" y="108.5" width="2" height="4" fill="#555"/><rect x="1301.7" y="100" width="28.3" height="5.8" fill="#f5a300"/><path d="M1304 100 v2 M1307.5 100 v1.3 M1311 100 v2 M1314.5 100 v1.3 M1318 100 v2 M1321.5 100 v1.3 M1325 100 v2 M1328 100 v1.3" stroke="#b06a00" stroke-width="0.8"/><path d="M1302.2 90 V98.3 M1329.5 90 V98.3" stroke="#555" stroke-width="1.1"/><line x1="1304" y1="94.2" x2="1328" y2="94.2" stroke="#555" stroke-width="1.1"/><path d="M1303 94.2 l3.5 -2.3 v4.6 z M1328.8 94.2 l-3.5 -2.3 v4.6 z" fill="#555"/><path d="M1369.5 84.5 a1.5 1.5 0 0 1 1.5 -1.5 h20 a1.5 1.5 0 0 1 1.5 1.5 v6.3 h-23 z" fill="#7cc0ee"/><rect x="1386" y="83" width="6.5" height="7.8" fill="#4e9fd6"/><rect x="1374" y="90.8" width="12" height="22.5" rx="1.5" fill="#84c4ee"/><line x1="1374" y1="93.0" x2="1386" y2="94.0" stroke="#5aa6dc" stroke-width="0.8"/><line x1="1374" y1="95.6" x2="1386" y2="96.6" stroke="#5aa6dc" stroke-width="0.8"/><line x1="1374" y1="98.2" x2="1386" y2="99.2" stroke="#5aa6dc" stroke-width="0.8"/><line x1="1374" y1="100.8" x2="1386" y2="101.8" stroke="#5aa6dc" stroke-width="0.8"/><line x1="1374" y1="103.4" x2="1386" y2="104.4" stroke="#5aa6dc" stroke-width="0.8"/><line x1="1374" y1="106.0" x2="1386" y2="107.0" stroke="#5aa6dc" stroke-width="0.8"/><line x1="1374" y1="108.6" x2="1386" y2="109.6" stroke="#5aa6dc" stroke-width="0.8"/><line x1="1374" y1="111.2" x2="1386" y2="112.2" stroke="#5aa6dc" stroke-width="0.8"/><path d="M1389.6 99 h4.2 v5.5 h5.5 v4.2 h-5.5 v5.5 h-4.2 v-5.5 h-5.5 v-4.2 h5.5 z" fill="#1faa3a"/><rect x="1410.8" y="83" width="28.9" height="28.7" fill="#7ec6f2"/><path d="M1410.8 111.7 V98 C1414 94 1418 93 1422 97 C1426 101 1428 103 1431 101 C1434 99 1437 100 1439.7 104 V111.7 Z" fill="#4a9ad6"/><circle cx="1431.7" cy="90.8" r="2.8" fill="#f4f0b0"/><rect x="1486.3" y="78.3" width="39.3" height="39.3" rx="1.5" fill="#0a93d6"/><rect x="1490.5" y="82.5" width="27.5" height="21.5" fill="none" stroke="#8fe08a" stroke-width="1" stroke-dasharray="3 2"/><path d="M1511.2 96.2 V111.5 L1514.3 108.5 L1516.6 113.8 L1519 112.7 L1516.8 107.6 L1521.2 107.4 Z" fill="#fff"/><circle cx="1642" cy="98" r="15.4" fill="#66c400"/><path d="M1634.5 98.5 L1640 103.8 L1650 93" fill="none" stroke="#fff" stroke-width="3.6" stroke-linecap="square"/></svg>
<svg width="1919" height="1079"><rect x="4.5" y="145.5" width="299" height="23" fill="#f2f2f2" stroke="#cfcfcf" stroke-width="1"/><path d="M9.5 156 l4.5 -3.2 v6.4 z M14 156 l4.5 -3.2 v6.4 z" fill="#222"/><circle cx="287.5" cy="156" r="4.6" fill="#222"/><rect x="285" y="155.3" width="5" height="1.4" fill="#fff"/><rect x="12" y="174.6" width="27" height="19" fill="#f7f7f7" fill-opacity="0.7"/><rect x="39.2" y="174.6" width="191.5" height="19" fill="#f2f2f2" fill-opacity="0.9"/><defs><linearGradient id="gtri" x1="0" y1="0" x2="1" y2="1"><stop offset="0" stop-color="#eee"/><stop offset="1" stop-color="#555"/></linearGradient></defs><path d="M21.5 189 L31 179.5 V189 Z" fill="url(#gtri)" stroke="#222" stroke-width="1"/><path d="M43.2 184.3 Q51 174.8 58.8 184.3 Q51 193.8 43.2 184.3 Z" fill="#9a9a9a"/><circle cx="51" cy="184.3" r="2.6" fill="#f0f0f0"/><circle cx="51" cy="184.3" r="1.6" fill="#9a9a9a"/><rect x="65" y="176.3" width="142" height="15.5" fill="#9b9b9b"/><path d="M68.5 180 l3 -3.2 h11.5 v11 l-3 3.3 h-11.5 z" fill="#e2e4e8" stroke="#333" stroke-width="0.9"/><path d="M68.5 180 h11.5 l3 -3.2 M80 180 v11" fill="none" stroke="#333" stroke-width="0.7"/><path d="M80 180 l3 -3.2 v11 l-3 3.3 z" fill="#c8cad0"/><circle cx="217.5" cy="184.3" r="5.6" fill="#fff" stroke="#222" stroke-width="1.2"/><circle cx="217.5" cy="184.3" r="2.2" fill="#222"/><rect x="58.1" y="198.7" width="157.7" height="19" fill="#f0f0f0" fill-opacity="0.9"/><path d="M41.199999999999996 202.7 L49.0 208.2 L41.199999999999996 213.7 Z" fill="#f4f4f4" stroke="#333" stroke-width="1.3" stroke-linejoin="round"/><rect x="58.1" y="222.7" width="141.6" height="19" fill="#f0f0f0" fill-opacity="0.9"/><path d="M41.199999999999996 226.7 L49.0 232.2 L41.199999999999996 237.7 Z" fill="#f4f4f4" stroke="#333" stroke-width="1.3" stroke-linejoin="round"/><rect x="58.1" y="246.2" width="114.7" height="19" fill="#f0f0f0" fill-opacity="0.9"/><path d="M41.199999999999996 250.2 L49.0 255.7 L41.199999999999996 261.2 Z" fill="#f4f4f4" stroke="#333" stroke-width="1.3" stroke-linejoin="round"/><rect x="58.1" y="270.3" width="106.7" height="19" fill="#f0f0f0" fill-opacity="0.9"/><path d="M41.199999999999996 274.3 L49.0 279.8 L41.199999999999996 285.3 Z" fill="#f4f4f4" stroke="#333" stroke-width="1.3" stroke-linejoin="round"/><rect x="66.7" y="199.6" width="3.6" height="4" transform="rotate(0 68.5 207.6)" fill="#8f8f8f"/><rect x="66.7" y="199.6" width="3.6" height="4" transform="rotate(45 68.5 207.6)" fill="#8f8f8f"/><rect x="66.7" y="199.6" width="3.6" height="4" transform="rotate(90 68.5 207.6)" fill="#8f8f8f"/><rect x="66.7" y="199.6" width="3.6" height="4" transform="rotate(135 68.5 207.6)" fill="#8f8f8f"/><rect x="66.7" y="199.6" width="3.6" height="4" transform="rotate(180 68.5 207.6)" fill="#8f8f8f"/><rect x="66.7" y="199.6" width="3.6" height="4" transform="rotate(225 68.5 207.6)" fill="#8f8f8f"/><rect x="66.7" y="199.6" width="3.6" height="4" transform="rotate(270 68.5 207.6)" fill="#8f8f8f"/><rect x="66.7" y="199.6" width="3.6" height="4" transform="rotate(315 68.5 207.6)" fill="#8f8f8f"/><circle cx="68.5" cy="207.6" r="5.5" fill="#8f8f8f"/><circle cx="68.5" cy="207.6" r="2.2" fill="#f0f0f0"/><path d="M61 225.6 h6 l1 1.5 h9 v11 h-16 z" fill="#9a9a9a"/><path d="M61 228.1 h16" stroke="#f0f0f0" stroke-width="0.8"/><path d="M61.2 256 Q69 247 76.8 256 Q69 265 61.2 256 Z" fill="none" stroke="#b0b0b0" stroke-width="1.1"/><circle cx="69" cy="256" r="2.4" fill="none" stroke="#b0b0b0" stroke-width="1"/><line x1="63" y1="250" x2="75" y2="262" stroke="#b0b0b0" stroke-width="1"/><path d="M86.2 249.7 h6 l1 1.5 h9 v11 h-16 z" fill="#9a9a9a"/><path d="M86.2 252.2 h16" stroke="#f0f0f0" stroke-width="0.8"/><path d="M61.2 280.3 Q69 270.8 76.8 280.3 Q69 289.8 61.2 280.3 Z" fill="#9a9a9a"/><circle cx="69" cy="280.3" r="2.6" fill="#f0f0f0"/><circle cx="69" cy="280.3" r="1.6" fill="#9a9a9a"/><path d="M86.2 273.7 h6 l1 1.5 h9 v11 h-16 z" fill="#9a9a9a"/><path d="M86.2 276.2 h16" stroke="#f0f0f0" stroke-width="0.8"/><rect x="4.5" y="953.5" width="299" height="24" fill="#f2f2f2" stroke="#cfcfcf" stroke-width="1"/><circle cx="287.2" cy="965.4" r="4.6" fill="#222"/><path d="M284.6 965.4 h5.2 M287.2 962.8 v5.2" stroke="#fff" stroke-width="1.3"/><defs><filter id="vsh" x="-30%" y="-30%" width="160%" height="160%"><feGaussianBlur stdDeviation="3"/></filter></defs><rect x="1830" y="179" width="53" height="53" fill="#000" fill-opacity="0.10" filter="url(#vsh)"/><rect x="1830.5" y="177.5" width="52" height="52" fill="#f0f0f0" fill-opacity="0.88" stroke="#747474" stroke-width="1"/><rect x="1840" y="187.2" width="33" height="32.3" fill="#e3e4e7" fill-opacity="0.85"/><text transform="translate(1840.4 208.9) scale(0.655 1)" font-family="Liberation Sans" font-weight="700" font-size="16.8" fill="#8c9096">OBEN</text><path d="M1831.8 163.5 L1834.9 169.8 L1838 163.5 M1834.9 169.8 V176.5" fill="none" stroke="#7be07b" stroke-width="1.3"/><path d="M1824.5 227.5 H1831.5 L1824 237.5 H1831.5" fill="none" stroke="#6a70f5" stroke-width="1.5"/><circle cx="1884" cy="225.4" r="1" fill="#f07070"/><path d="M1888 220.5 L1893.8 230.8 M1893.8 220.5 L1888 230.8" stroke="#f58080" stroke-width="1.3"/><rect x="1894.7" y="264" width="24.3" height="180" fill="#f0f0f0"/><path d="M1899.5 275 l4 -2.8 v5.6 z M1903.5 275 l4 -2.8 v5.6 z" fill="#333"/><rect x="842" y="952" width="236.5" height="23.5" fill="#f0f0f0"/><circle cx="1899.5" cy="965.5" r="7.4" fill="#111"/><rect x="1899.5" y="965.5" width="7.4" height="7.4" fill="#111"/><path d="M1893.5 967 l10 -6 M1894 969.5 l10 -6 M1896 970.5 l8 -5 M1900 964 l4 4.5" stroke="#ccc" stroke-width="0.7"/></svg><div class="a" style="left:29.2px;top:150.69px;font-size:11px;line-height:11px;font-weight:400;color:#4a4a4a;">BROWSER</div><div class="a" style="left:97.7px;top:178.99px;font-size:11px;line-height:11px;font-weight:700;color:#fff;">(Nicht gespeichert)</div><div class="a" style="left:91.4px;top:203.49px;font-size:11px;line-height:11px;font-weight:400;color:#2e2e2e;">Dokumenteinstellungen</div><div class="a" style="left:91.4px;top:227.49px;font-size:11px;line-height:11px;font-weight:400;color:#2e2e2e;">Benannte Ansichten</div><div class="a" style="left:116px;top:251.49px;font-size:11px;line-height:11px;font-weight:400;color:#2e2e2e;">Ursprung</div><div class="a" style="left:116px;top:275.49px;font-size:11px;line-height:11px;font-weight:400;color:#2e2e2e;">Skizzen</div><div class="a" style="left:29.2px;top:959.89px;font-size:11px;line-height:11px;font-weight:400;color:#4a4a4a;">KOMMENTARE</div><div class="a" style="left:1906.5px;top:382px;width:120px;height:14px;margin-left:-60px;font-size:10.2px;line-height:14px;text-align:center;color:#222;transform:rotate(-90deg)">SKIZZENPALETTE</div>
<svg width="1919" height="1079"><path d="M853 957 l-2.8 3.5 h1.9 v11.5 h1.8 v-11.5 h1.9 z" fill="#fff" stroke="#333" stroke-width="0.9"/><path d="M850 966.5 c-5 1 -5.5 3.5 0 4.5 M856.5 966.5 c5 1 5 3.5 0 4.5 h-4" fill="none" stroke="#333" stroke-width="1.1"/><path d="M846.5 970.5 l3.2 -2.5 v5 z" fill="#333"/><path d="M866.3 962.2 L871.6999999999999 962.2 L869.0 965.6 Z" fill="#333"/><path d="M878.5 960.5 h15 v11 h-15 z" fill="#f4f4f4" stroke="#444" stroke-width="1.1"/><rect x="881.5" y="964" width="9" height="4" fill="#8a9ab0" stroke="#555" stroke-width="0.6"/><path d="M879.5 960.5 l3 -3.5 h1 l0 2 l3 -1.5 l0 1.5 l3 -1 l1 2.5" fill="none" stroke="#555" stroke-width="0.9"/><g transform="translate(2.5 0)"><path d="M906 964 v-5 a1.2 1.2 0 0 1 2.4 0 v4 v-6 a1.2 1.2 0 0 1 2.4 0 v6 v-6.5 a1.2 1.2 0 0 1 2.4 0 v6.5 v-5 a1.2 1.2 0 0 1 2.4 0 v9 c0 3 -2 5 -5 5 h-1.5 c-2 0 -3 -1 -4 -2.5 l-3.5 -5 a1.2 1.2 0 0 1 2 -1.3 z" fill="#fff" stroke="#333" stroke-width="0.9"/></g><circle cx="935" cy="963" r="4.6" fill="#dfeef0" stroke="#444" stroke-width="1.1"/><line x1="938.5" y1="966.5" x2="942" y2="970" stroke="#333" stroke-width="2.2"/><path d="M941.5 957.5 h4.5 M943.7 955.3 v4.4 M941.5 961.5 h4.5" stroke="#333" stroke-width="0.9"/><rect x="955.5" y="956" width="16.5" height="16" fill="none" stroke="#333" stroke-width="0.9" stroke-dasharray="1.5 1.5"/><circle cx="963" cy="963" r="5.6" fill="#e0eef0" stroke="#444" stroke-width="1.1"/><line x1="967" y1="967" x2="971" y2="971" stroke="#333" stroke-width="2.2"/><path d="M977 962.2 L982.4 962.2 L979.7 965.6 Z" fill="#333"/><rect x="989.5" y="956.5" width="15" height="11.5" rx="1" fill="#8aaee0" stroke="#444" stroke-width="1.1"/><rect x="991.5" y="958.5" width="11" height="7.5" fill="#a8c6ee"/><path d="M995 968 v2 h-2 v1.5 h8 v-1.5 h-2 v-2" fill="#ddd" stroke="#444" stroke-width="0.8"/><path d="M1007.5 962.2 L1012.9 962.2 L1010.2 965.6 Z" fill="#333"/><rect x="1020.5" y="956.5" width="15.5" height="15.5" fill="#888" stroke="#555" stroke-width="0.8"/><line x1="1023.6" y1="956.5" x2="1023.6" y2="972" stroke="#ddd" stroke-width="0.7"/><line x1="1020.5" y1="959.6" x2="1036" y2="959.6" stroke="#ddd" stroke-width="0.7"/><line x1="1026.7" y1="956.5" x2="1026.7" y2="972" stroke="#ddd" stroke-width="0.7"/><line x1="1020.5" y1="962.7" x2="1036" y2="962.7" stroke="#ddd" stroke-width="0.7"/><line x1="1029.8" y1="956.5" x2="1029.8" y2="972" stroke="#ddd" stroke-width="0.7"/><line x1="1020.5" y1="965.8" x2="1036" y2="965.8" stroke="#ddd" stroke-width="0.7"/><line x1="1032.9" y1="956.5" x2="1032.9" y2="972" stroke="#ddd" stroke-width="0.7"/><line x1="1020.5" y1="968.9" x2="1036" y2="968.9" stroke="#ddd" stroke-width="0.7"/><path d="M1038 962.2 L1043.4 962.2 L1040.7 965.6 Z" fill="#333"/><rect x="1051.3" y="957" width="14.5" height="13" fill="#3a5cab"/><rect x="1052.8" y="958.5" width="5" height="4" fill="#9bb2e0"/><rect x="1059.3" y="958.5" width="5" height="4" fill="#9bb2e0"/><rect x="1052.8" y="964.5" width="5" height="4" fill="#9bb2e0"/><rect x="1059.3" y="964.5" width="5" height="4" fill="#9bb2e0"/><path d="M1069.5 962.2 L1074.9 962.2 L1072.2 965.6 Z" fill="#333"/><rect x="10.8" y="1000.6" width="2.1" height="12.6" fill="#666"/><path d="M13.4 1006.9 L22.2 1001.2 V1012.6 Z" fill="#666"/><path d="M35.4 1006.9 L45.3 1000.6 V1013.2 Z" fill="#666"/><rect x="46.1" y="1004.8" width="1.8" height="4.8" fill="#666"/><path d="M61.1 1000 V1013.8 L73.1 1006.9 Z" fill="#666"/><rect x="84.9" y="1004.8" width="1.7" height="4.8" fill="#666"/><path d="M88.1 1000.6 V1013.2 L97.7 1006.9 Z" fill="#666"/><path d="M110.9 1001.2 V1012.6 L119.9 1006.9 Z" fill="#666"/><rect x="119.9" y="1000.6" width="2.1" height="12.6" fill="#666"/><path d="M154.6 1017 V1022.8 H202.6 V1017 M178 1017 V1022.8" fill="none" stroke="#c8c8c8" stroke-width="1.6"/><defs><linearGradient id="sph" x1="0" y1="0" x2="0" y2="1"><stop offset="0" stop-color="#8fcbf6"/><stop offset="0.55" stop-color="#8ac6f3"/><stop offset="0.62" stop-color="#6aaee0"/><stop offset="1" stop-color="#5ea6dc"/></linearGradient></defs><circle cx="154" cy="1006" r="8.1" fill="url(#sph)"/><path d="M171.5 999.5 l3.5 3.5 M175 999.5 l-3.5 3.5" stroke="#e02020" stroke-width="1.4"/><path d="M176.5 1005.5 h7 v7.5 h-7 z" fill="#b9dcf2" stroke="#5a8fc0" stroke-width="0.8"/><path d="M176.5 1005.5 l2.3 -2.3 h7 l-2.3 2.3 z M183.5 1005.5 l2.3 -2.3 v7.5 l-2.3 2.3 z" fill="#eee" stroke="#888" stroke-width="0.6"/><rect x="190" y="994" width="24.6" height="23.6" rx="2" fill="#0a93d6"/><rect x="195" y="999" width="13.5" height="13" fill="none" stroke="#dff2ff" stroke-width="0.9" stroke-dasharray="2 1.5"/><path d="M203 1013 l5 -6 l2 1.6 l-5 6 l-2.5 0.8 z" fill="#f5d27a"/><path d="M208 1007 l1.2 -1.4 l2 1.6 l-1.2 1.4 z" fill="#e55"/><path d="M208 992 H220 V995 L215 1000.5 H213 L208 995 Z" fill="#555"/><rect x="213" y="997" width="2.1" height="27" fill="#555"/><rect x="1896.8" y="999.0" width="3.4" height="3.5" transform="rotate(0 1898.5 1006.5)" fill="#8a8a8a"/><rect x="1896.8" y="999.0" width="3.4" height="3.5" transform="rotate(45 1898.5 1006.5)" fill="#8a8a8a"/><rect x="1896.8" y="999.0" width="3.4" height="3.5" transform="rotate(90 1898.5 1006.5)" fill="#8a8a8a"/><rect x="1896.8" y="999.0" width="3.4" height="3.5" transform="rotate(135 1898.5 1006.5)" fill="#8a8a8a"/><rect x="1896.8" y="999.0" width="3.4" height="3.5" transform="rotate(180 1898.5 1006.5)" fill="#8a8a8a"/><rect x="1896.8" y="999.0" width="3.4" height="3.5" transform="rotate(225 1898.5 1006.5)" fill="#8a8a8a"/><rect x="1896.8" y="999.0" width="3.4" height="3.5" transform="rotate(270 1898.5 1006.5)" fill="#8a8a8a"/><rect x="1896.8" y="999.0" width="3.4" height="3.5" transform="rotate(315 1898.5 1006.5)" fill="#8a8a8a"/><circle cx="1898.5" cy="1006.5" r="5.2" fill="#8a8a8a"/><circle cx="1898.5" cy="1006.5" r="2.2" fill="#f2f2f2"/><defs><linearGradient id="cl" x1="0" y1="0" x2="0" y2="1"><stop offset="0" stop-color="#e8f0fb"/><stop offset="1" stop-color="#a9c4ea"/></linearGradient></defs><path d="M22 1060 a4.5 4.5 0 0 1 1 -8.8 a6 6 0 0 1 11.5 -1.5 a5 5 0 0 1 6.5 5 a3.8 3.8 0 0 1 -1 5.3 z" fill="url(#cl)" stroke="#9fb8dd" stroke-width="0.6"/><path d="M34 1058 l4.2 6.5 a2.8 2.8 0 1 1 -5 0.5 z" fill="#1a73e8"/><defs><linearGradient id="wl" x1="0" y1="0" x2="1" y2="1"><stop offset="0" stop-color="#3ccdfc"/><stop offset="1" stop-color="#0a6fd8"/></linearGradient></defs><path d="M683.5 1045 h10.7 v10.7 h-10.7 z M695.6 1045 h10.7 v10.7 h-10.7 z M683.5 1057 h10.7 v10.7 h-10.7 z M695.6 1057 h10.7 v10.7 h-10.7 z" fill="url(#wl)"/><rect x="719.5" y="1041" width="219" height="30.3" rx="15.15" fill="#fbfbfb" stroke="#dedede" stroke-width="1"/><circle cx="736.5" cy="1054.2" r="5" fill="none" stroke="#222" stroke-width="1.6"/><line x1="740" y1="1057.8" x2="744.5" y2="1062.3" stroke="#222" stroke-width="1.8"/><defs><linearGradient id="tv" x1="0" y1="0" x2="1" y2="1"><stop offset="0" stop-color="#fdfdfd"/><stop offset="1" stop-color="#c9c9c9"/></linearGradient><linearGradient id="tv2" x1="0" y1="0" x2="0" y2="1"><stop offset="0" stop-color="#444"/><stop offset="1" stop-color="#111"/></linearGradient></defs><rect x="951" y="1050.9" width="18" height="16.1" rx="1" fill="url(#tv2)"/><rect x="957" y="1044.9" width="17.7" height="15.7" rx="1" fill="url(#tv)" fill-opacity="0.92"/><circle cx="1007" cy="1055.4" r="11.3" fill="none" stroke="#ff1b4a" stroke-width="1.7"/><ellipse cx="1007" cy="1055.4" rx="6" ry="11" fill="none" stroke="#ff1b4a" stroke-width="1.5"/><path d="M1038.9 1046 a1.2 1.2 0 0 1 1.2 -1.2 h6.5 l2 2 h13.3 a1.2 1.2 0 0 1 1.2 1.2 v18.4 h-24.2 z" fill="#e6a817"/><path d="M1038.9 1049 h24.2 v17.4 h-24.2 z" fill="#ffcd45"/><rect x="1043.4" y="1060" width="14.9" height="6.4" rx="1.5" fill="#1976d2"/><circle cx="1095.1" cy="1055.4" r="12.1" fill="#5865f2"/><path d="M1088.5 1050.5 c2 -1 3.5 -1.2 4 -1.2 l0.5 1 h4.2 l0.5 -1 c0.5 0 2 0.2 4 1.2 c1.5 2.5 2 5 1.8 8 c-1.5 1.2 -3 1.8 -4 2 l-0.9 -1.3 c-2.3 0.6 -5.3 0.6 -7.6 0 l-0.9 1.3 c-1 -0.2 -2.5 -0.8 -4 -2 c-0.2 -3 0.3 -5.5 1.8 -8 z" fill="#fff"/><circle cx="1091.8" cy="1055.5" r="1.5" fill="#5865f2"/><circle cx="1098.4" cy="1055.5" r="1.5" fill="#5865f2"/><circle cx="1139" cy="1055.7" r="11.3" fill="#1ed760"/><path d="M1132 1051.5 c4.5 -1.5 9.5 -1 13.5 1 M1133 1055.3 c3.8 -1.1 7.8 -0.7 11 0.9 M1134 1058.8 c3 -0.8 6 -0.5 8.6 0.7" fill="none" stroke="#111" stroke-width="1.7" stroke-linecap="round"/><rect x="1171" y="1044" width="24" height="24" fill="#5ea83a"/><path d="M1175 1049 h5 v5 h-5 z M1186 1049 h5 v5 h-5 z M1180 1054 h6 v3 h2 v6 h-3 v-2 h-4 v2 h-3 v-6 h2 z" fill="#111"/><rect x="1208.5" y="1037" width="37" height="37.8" rx="4" fill="#f8f8f8" stroke="#e6e6e6" stroke-width="0.8"/><path d="M1218 1045 h18 a2 2 0 0 1 2 2 v19 a2 2 0 0 1 -2 2 h-15.5 l-4.3 -4 z" fill="#c04a10"/><path d="M1216.3 1047.5 a2.5 2.5 0 0 1 2.5 -2.5 h17 a2.2 2.2 0 0 1 2.2 2.2 v14.3 h-19 l-2.7 2.5 z" fill="#ff6d1a"/><path d="M1216.3 1047.5 a2.5 2.5 0 0 1 2.5 -2.5 h1 v17 l-3.5 2 z" fill="#ffa060"/><path d="M1224.5 1048 h8 v2.7 h-5 v2.6 h4.5 v2.6 h-4.5 v4.6 h-3 z" fill="#fff"/><text x="1227.5" y="1066.5" font-size="4.5" font-family="Liberation Sans" font-weight="700" fill="#fff" text-anchor="middle">FUS</text><rect x="1003.8" y="1072" width="6.4" height="3" rx="1.5" fill="#7a7a7a"/><rect x="1047.8" y="1072" width="6.4" height="3" rx="1.5" fill="#7a7a7a"/><rect x="1091.8" y="1072" width="6.4" height="3" rx="1.5" fill="#7a7a7a"/><rect x="1135.8" y="1072" width="6.4" height="3" rx="1.5" fill="#7a7a7a"/><rect x="1219.2" y="1072" width="15.6" height="3" rx="1.5" fill="#0067c0"/><path d="M1734 1059 l5.3 -5.3 l5.3 5.3" fill="none" stroke="#222" stroke-width="1.2"/><path d="M1763.6 1048.5 h10.5 v11 h-10.5 z" fill="none" stroke="#111" stroke-width="1.1"/><path d="M1767 1063.5 h5.5 M1769.7 1059.5 v4" stroke="#111" stroke-width="1.1"/><rect x="1775.3" y="1048.2" width="3.3" height="4.5" rx="1" fill="#f0f0f0" stroke="#111" stroke-width="1"/><line x1="1776.9" y1="1052.7" x2="1776.9" y2="1064" stroke="#111" stroke-width="1"/><path d="M1787.5 1053.5 h2.8 l3.7 -3.3 v12 l-3.7 -3.3 h-2.8 z" fill="none" stroke="#111" stroke-width="1.1" stroke-linejoin="round"/><path d="M1796 1053 a3.5 3.5 0 0 1 0 5.5 M1798.5 1051 a6.5 6.5 0 0 1 0 9.5" fill="none" stroke="#111" stroke-width="1.1"/><path d="M1801 1049.5 a9 9 0 0 1 0 12.5" fill="none" stroke="#aaa" stroke-width="0.9"/><rect x="1811.5" y="1050.8" width="13.6" height="9" rx="2" fill="none" stroke="#111" stroke-width="1.1"/><rect x="1825.3" y="1053.5" width="1.6" height="3.5" fill="#111"/><path d="M1813.3 1052.5 h10 v5.6 h-10 z" fill="#111"/><path d="M1813.5 1048.3 l-1.5 4.5 h2.2 l-1 3.5" fill="none" stroke="#111" stroke-width="1" /></svg><div class="a" style="left:50.4px;top:1042.87px;font-size:11.5px;line-height:11.5px;font-weight:400;color:#222;">10°C</div><div class="a" style="left:50.4px;top:1058.04px;font-size:12px;line-height:12px;font-weight:400;color:#444;letter-spacing:-0.15px">Leichter Regen</div><div class="a" style="left:756.3px;top:1050.50px;font-size:13px;line-height:13px;font-weight:400;color:#444;">Suche</div><div class="a" style="left:1872.3px;top:1043.07px;font-size:11.5px;line-height:11.5px;font-weight:400;color:#1a1a1a;">19:50</div><div class="a" style="left:1843px;top:1059.27px;font-size:11.5px;line-height:11.5px;font-weight:400;color:#1a1a1a;">02.11.2025</div>
</body></html>
